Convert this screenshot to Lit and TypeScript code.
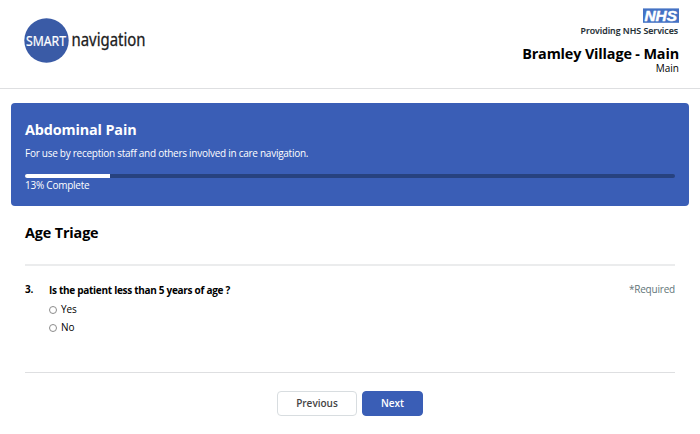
import { LitElement, html, css } from "lit";
import { customElement, state } from "lit/decorators.js";
import { styleMap } from "lit/directives/style-map.js";

@customElement("app-header")
class AppHeader extends LitElement {
  static styles = css`
    :host { display: flex; justify-content: space-between; box-sizing: border-box; height: 89px; padding: 8px 21px 0 24px; border-bottom: 1px solid #dedfe1; }
    .logo { display: block; margin-top: 10px; overflow: visible; }
    .org { display: flex; flex-direction: column; align-items: flex-end; color: #000; }
    .nhs { display: block; overflow: visible; }
    .name { font-size: 14.4px; font-weight: 700; line-height: 18px; margin-top: 8px; letter-spacing: -0.14px; white-space: nowrap; }
    .site { font-size: 10px; line-height: 10px; }
  `;
  render() {
    return html`
      <svg class="logo" width="130" height="46" viewBox="0 0 130 46" font-family="Noto Sans, sans-serif">
        <circle cx="22.5" cy="22.5" r="22.2" fill="#3a5ba6" />
        <text x="2" y="27.8" font-size="13.6" fill="#fff" stroke="#fff" stroke-width="0.2" textLength="40" lengthAdjust="spacingAndGlyphs">SMART</text>
        <text x="47.5" y="28.4" font-size="17.6" fill="#202020" stroke="#202020" stroke-width="0.3" textLength="74" lengthAdjust="spacingAndGlyphs">navigation</text>
      </svg>
      <div class="org">
        <svg class="nhs" width="101" height="29" viewBox="0 0 101 29">
          <rect x="65" y="0.4" width="36" height="14.4" fill="#4472c4" />
          <text x="66.5" y="13" font-family="Liberation Sans, sans-serif" font-size="15.5" font-weight="700" font-style="italic" fill="#fff" stroke="#fff" stroke-width="0.5" textLength="32.5" lengthAdjust="spacingAndGlyphs">NHS</text>
          <text x="2.5" y="26" font-family="Open Sans, sans-serif" font-size="9.4" font-weight="600" fill="#212b32" stroke="#212b32" stroke-width="0.15" textLength="97.5" lengthAdjust="spacingAndGlyphs">Providing NHS Services</text>
        </svg>
        <div class="name">Bramley Village - Main</div>
        <div class="site">Main</div>
      </div>
    `;
  }
}

@customElement("progress-panel")
class ProgressPanel extends LitElement {
  static properties = { percent: { type: Number } };
  declare percent: number;
  static styles = css`
    :host { display: block; box-sizing: border-box; height: 103px; margin: 14px 11px 0; padding: 17px 14px 0; border-radius: 4px; background: #3a5eb6; color: #fff; }
    .title { font-size: 14.4px; line-height: 20px; font-weight: 700; letter-spacing: -0.14px; }
    .desc { font-size: 10px; line-height: 14px; margin-top: 6px; letter-spacing: -0.265px; }
    .track { height: 4px; margin-top: 14px; border-radius: 2px; background: #27427f; overflow: hidden; }
    .bar { height: 100%; background: #fff; }
    .label { font-size: 10px; line-height: 14px; letter-spacing: -0.24px; }
  `;
  render() {
    return html`
      <div class="title">Abdominal Pain</div>
      <div class="desc">For use by reception staff and others involved in care navigation.</div>
      <div class="track"><div class="bar" style=${styleMap({ width: `${this.percent}%` })}></div></div>
      <div class="label">${this.percent}% Complete</div>
    `;
  }
}

@customElement("app-root")
class AppRoot extends LitElement {
  @state() private answer = "";

  static styles = css`
    :host { display: block; height: 434px; overflow: hidden; background: #fff; color: #000; font-family: "Open Sans", sans-serif; }
    .section { margin: 0 25px; }
    .heading { font-size: 14.4px; font-weight: 700; line-height: 20px; padding: 17px 0 21px; letter-spacing: -0.14px; border-bottom: 2px solid #ebeced; }
    .question { display: flex; box-sizing: border-box; height: 107px; padding-top: 16px; font-size: 10px; line-height: 14px; letter-spacing: -0.15px; border-bottom: 1px solid #dedfe1; }
    .num { width: 24px; font-weight: 700; }
    .body { flex: 1; }
    .text { font-weight: 700; padding-top: 1px; letter-spacing: -0.29px; }
    .option { display: flex; align-items: center; height: 14px; margin-top: 5px; letter-spacing: -0.1px; }
    .option + .option { margin-top: 4px; }
    .radio { appearance: none; box-sizing: border-box; width: 8px; height: 8px; margin: 1px 4px 0 0; border: 1px solid #8c8c8c; border-radius: 50%; background: #fff; }
    .radio:checked { background: #3a5eb6; }
    .required { color: #627579; letter-spacing: -0.2px; }
    .actions { display: flex; justify-content: center; gap: 5px; padding-top: 18px; }
    .btn { box-sizing: border-box; height: 25px; padding: 0; border: 1px solid #d8dde0; border-radius: 4px; background: #fff; color: #444; font: 600 10px/21px "Open Sans", sans-serif; }
    .previous { width: 80px; }
    .next { width: 61px; border-color: #3a5eb6; background: #3a5eb6; color: #fff; }
  `;

  render() {
    return html`
      <app-header></app-header>
      <progress-panel percent="13"></progress-panel>
      <main class="section">
        <div class="heading">Age Triage</div>
        <div class="question">
          <div class="num">3.</div>
          <div class="body">
            <div class="text">Is the patient less than 5 years of age ?</div>
            ${["Yes", "No"].map(
              (o) => html`<label class="option"><input class="radio" type="radio" name="answer" .checked=${this.answer === o} @change=${() => (this.answer = o)} />${o}</label>`
            )}
          </div>
          <div class="required">*Required</div>
        </div>
        <div class="actions">
          <button class="btn previous">Previous</button>
          <button class="btn next">Next</button>
        </div>
      </main>
    `;
  }
}
